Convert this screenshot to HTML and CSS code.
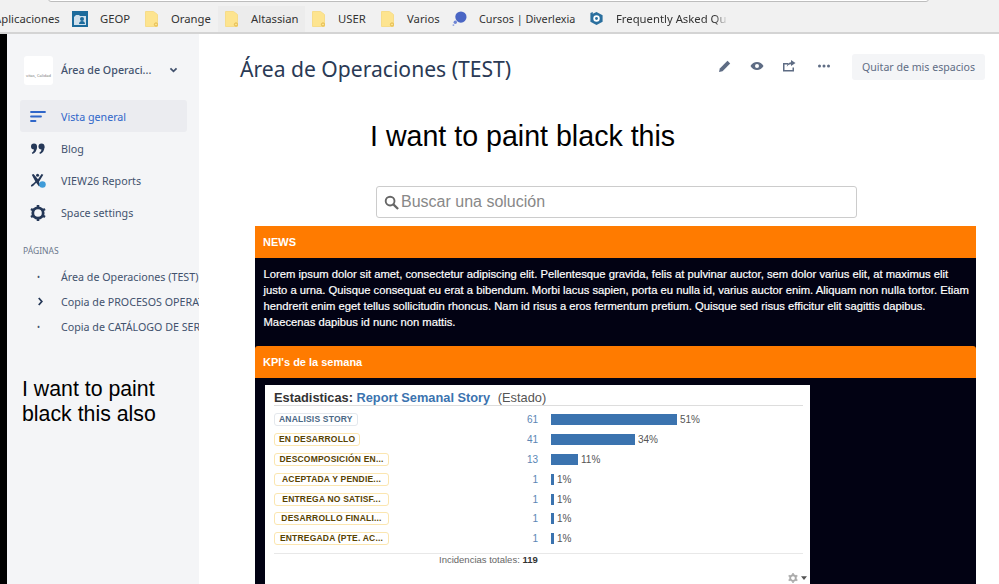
FILE: index.html
```html
<!DOCTYPE html>
<html lang="es">
<head>
<meta charset="utf-8">
<title>Área de Operaciones (TEST)</title>
<link rel="stylesheet" href="styles.css">
</head>
<body>
<header class="browser">
  <div class="address"></div>
  <nav class="bookmarks">
    <span class="bm bm-apps">Aplicaciones</span>
    <span class="bm bm-geop"><svg class="fav" viewBox="0 0 16 16"><rect width="16" height="16" fill="#1c6b9c"/><path d="M2 6l2-2h3l1 1h6v9H2z" fill="#cfe0ec"/><circle cx="10" cy="8" r="2" fill="#1c6b9c"/><path d="M7 13c0-2 1.500-3 3-3s3 1 3 3z" fill="#1c6b9c"/></svg>GEOP</span>
    <span class="bm bm-orange"><svg class="folder" viewBox="0 0 13 16"><path d="M.5.500h8l4 3v12H.5z" fill="#fde48f" stroke="#f6dc8a"/><circle cx="11" cy="13.500" r="1.600" fill="none" stroke="#e3b94c"/></svg>Orange</span>
    <span class="bm bm-alt"><svg class="folder" viewBox="0 0 13 16"><path d="M.5.500h8l4 3v12H.5z" fill="#fde48f" stroke="#f6dc8a"/><circle cx="11" cy="13.500" r="1.600" fill="none" stroke="#e3b94c"/></svg>Altassian</span>
    <span class="bm bm-user"><svg class="folder" viewBox="0 0 13 16"><path d="M.5.500h8l4 3v12H.5z" fill="#fde48f" stroke="#f6dc8a"/><circle cx="11" cy="13.500" r="1.600" fill="none" stroke="#e3b94c"/></svg>USER</span>
    <span class="bm bm-varios"><svg class="folder" viewBox="0 0 13 16"><path d="M.5.500h8l4 3v12H.5z" fill="#fde48f" stroke="#f6dc8a"/><circle cx="11" cy="13.500" r="1.600" fill="none" stroke="#e3b94c"/></svg>Varios</span>
    <span class="bm bm-cursos"><svg class="fav fav-15" viewBox="0 0 16 16"><circle cx="9.500" cy="6.500" r="6" fill="#4a66c4"/><circle cx="3.500" cy="12" r="1.800" fill="#6f86d4"/><circle cx="1.500" cy="15" r="1" fill="#8fa2e0"/></svg>Cursos | Diverlexia</span>
    <span class="bm bm-faq"><svg class="fav fav-15" viewBox="0 0 16 16"><path d="M8 1l6.500 3.500v7L8 15l-6.500-3.500V2L4 1v2z" fill="#2a6f9e"/><circle cx="8" cy="8" r="3.400" fill="#fff"/><circle cx="8" cy="8" r="1.500" fill="#2a6f9e"/></svg><span class="faq-text">Frequently Asked Qu</span></span>
  </nav>
</header>
<div class="app">
  <div class="strip"></div>
  <aside class="sidebar">
    <div class="space">
      <div class="logo"><span>vitas, Calidad</span></div>
      <span class="space-name">Área de Operaci...</span>
      <svg class="chev" viewBox="0 0 10 8"><path d="M1.500 1.500 5 5l3.500-3.500" fill="none" stroke="#42526e" stroke-width="2"/></svg>
    </div>
    <ul class="menu">
      <li class="item active"><svg class="ic" viewBox="0 0 16 16"><path d="M1 3h14M1 7.500h10M1 12h4.500" stroke="#2f66c9" stroke-width="1.800" stroke-linecap="round" fill="none"/></svg>Vista general</li>
      <li class="item"><svg class="ic" viewBox="0 0 16 16"><circle cx="4" cy="5.500" r="3" fill="#253858"/><path d="M7 5.500c0 4-1.800 6.500-4.500 7.500l-.7-1.200C3.500 10.800 4 9.500 4 8z" fill="#253858"/><circle cx="11.500" cy="5.500" r="3" fill="#253858"/><path d="M14.500 5.500c0 4-1.800 6.500-4.500 7.500l-.7-1.200c1.700-1 2.200-2.300 2.200-3.800z" fill="#253858"/></svg>Blog</li>
      <li class="item"><svg class="ic" viewBox="0 0 18 18"><path d="M2 2l2-1 5 6 4-6 2 1-5 8 2 4-2 1-3-4-3 3c-1 1-3 2-3 .500s2-2 3-3l2-2z" fill="#253858"/><circle cx="8.500" cy="2.500" r="1.700" fill="#253858"/><circle cx="14" cy="13" r="3.700" fill="#3f9bd8"/></svg>VIEW26 Reports</li>
      <li class="item"><svg class="ic" viewBox="0 0 16 16"><circle cx="8" cy="8" r="5.200" fill="none" stroke="#253858" stroke-width="2.800"/><path d="M8 0v3M8 13v3M1 4l2.500 1.500M12.500 10.500 15 12M1 12l2.500-1.500M12.500 5.500 15 4" stroke="#253858" stroke-width="2.600"/></svg>Space settings</li>
    </ul>
    <h4 class="pages-title">PÁGINAS</h4>
    <ul class="tree">
      <li class="node"><span class="mark">•</span>Área de Operaciones (TEST)</li>
      <li class="node"><svg class="mark-chev" viewBox="0 0 8 10"><path d="M2 1l3.500 4L2 9" fill="none" stroke="#253858" stroke-width="2"/></svg>Copia de PROCESOS OPERATIVOS</li>
      <li class="node"><span class="mark">•</span>Copia de CATÁLOGO DE SERVICIOS</li>
    </ul>
    <p class="note">I want to paint black this also</p>
  </aside>
  <main class="main">
    <div class="page-head">
      <h1 class="page-title">Área de Operaciones (TEST)</h1>
      <div class="actions">
        <svg class="act act-edit" viewBox="0 0 14 14"><path d="M1 13l.8-3.500L9.500 1.800l2.700 2.700-7.700 7.700z" fill="#5e6c84"/></svg>
        <svg class="act act-eye" viewBox="0 0 14 14"><path fill-rule="evenodd" d="M.5 7C2 4.300 4.300 3 7 3s5 1.300 6.500 4C12 9.700 9.700 11 7 11S2 9.700.5 7zM7 5a2 2 0 1 0 0 4 2 2 0 0 0 0-4z" fill="#5e6c84"/></svg>
        <svg class="act act-share" viewBox="0 0 14 14"><path d="M1 4h5v1.500H2.500v5.500h8V8.500H12V12.500H1z" fill="#5e6c84"/><path d="M9 1l4.500 3L9 7V5.200C7 5.200 5.500 6 4.800 8c0-3 1.700-4.500 4.200-4.800z" fill="#5e6c84"/></svg>
        <svg class="act act-more" viewBox="0 0 14 14"><circle cx="2.500" cy="7" r="1.500" fill="#5e6c84"/><circle cx="7" cy="7" r="1.500" fill="#5e6c84"/><circle cx="11.500" cy="7" r="1.500" fill="#5e6c84"/></svg>
        <button class="remove">Quitar de mis espacios</button>
      </div>
    </div>
    <p class="paint">I want to paint black this</p>
    <div class="search">
      <svg class="search-ic" viewBox="0 0 16 16"><circle cx="6.500" cy="6.500" r="4.700" fill="none" stroke="#666" stroke-width="2"/><path d="M10 10l5 5" stroke="#666" stroke-width="2.400"/></svg>
      <span>Buscar una solución</span>
    </div>
    <section class="panel">
      <div class="band">NEWS</div>
      <p class="lorem">Lorem ipsum dolor sit amet, consectetur adipiscing elit. Pellentesque gravida, felis at pulvinar auctor, sem dolor varius elit, at maximus elit justo a urna. Quisque consequat eu erat a bibendum. Morbi lacus sapien, porta eu nulla id, varius auctor enim. Aliquam non nulla tortor. Etiam hendrerit enim eget tellus sollicitudin rhoncus. Nam id risus a eros fermentum pretium. Quisque sed risus efficitur elit sagittis dapibus. Maecenas dapibus id nunc non mattis.</p>
      <div class="band band-kpi">KPI's de la semana</div>
      <div class="kpi-body">
        <div class="gadget">
          <h2 class="gadget-title">Estadisticas: <a>Report Semanal Story</a> <span>(Estado)</span></h2>
          <div class="rows">
            <div class="row"><span class="lz lz-grey">ANALISIS STORY</span><span class="num">61</span><span class="bar bar-51"></span><span class="pct">51%</span></div>
            <div class="row"><span class="lz">EN DESARROLLO</span><span class="num">41</span><span class="bar bar-34"></span><span class="pct">34%</span></div>
            <div class="row"><span class="lz lz-w">DESCOMPOSICIÓN EN...</span><span class="num">13</span><span class="bar bar-11"></span><span class="pct">11%</span></div>
            <div class="row"><span class="lz lz-w">ACEPTADA Y PENDIE...</span><span class="num">1</span><span class="bar bar-1"></span><span class="pct">1%</span></div>
            <div class="row"><span class="lz lz-w">ENTREGA NO SATISF...</span><span class="num">1</span><span class="bar bar-1"></span><span class="pct">1%</span></div>
            <div class="row"><span class="lz lz-w">DESARROLLO FINALI...</span><span class="num">1</span><span class="bar bar-1"></span><span class="pct">1%</span></div>
            <div class="row"><span class="lz lz-w">ENTREGADA (PTE. AC...</span><span class="num">1</span><span class="bar bar-1"></span><span class="pct">1%</span></div>
          </div>
          <div class="total">Incidencias totales: <b>119</b></div>
          <div class="gear"><svg viewBox="0 0 16 16" class="gear-ic"><circle cx="8" cy="8" r="4.500" fill="none" stroke="#aaa" stroke-width="3"/><path d="M8 0v3M8 13v3M1 4l2.500 1.500M12.500 10.500 15 12M1 12l2.500-1.500M12.500 5.500 15 4" stroke="#aaa" stroke-width="2.400"/></svg><svg viewBox="0 0 8 5" class="gear-caret"><path d="M0 0h8L4 5z" fill="#555"/></svg></div>
        </div>
      </div>
    </section>
  </main>
</div>
</body>
</html>
```
FILE: styles.css
```css
* { box-sizing: border-box; }
html, body { margin: 0; height: 584px; overflow: hidden; background: #fff; }
body { font-family: "Noto Sans", sans-serif; display: flex; flex-direction: column; }
ul { list-style: none; margin: 0; padding: 0; }

.browser { height: 34px; flex: none; background: #f1f1f1; border-bottom: 2px solid #d4d4d4; position: relative; overflow: hidden; }
.address { position: absolute; left: 48px; width: 881px; top: -20px; height: 22px; border: 1px solid #bdbdbd; border-radius: 3px; background: #fff; }
.bookmarks { display: flex; align-items: center; height: 32px; white-space: nowrap; font-size: 11.300px; color: #333; padding-top: 5px; margin-left: -6px; }
.bm { display: flex; align-items: center; height: 26px; flex: none; }
.fav { width: 16px; height: 16px; margin-right: 12px; flex: none; }
.fav-15 { width: 15px; height: 15px; }
.folder { width: 13px; height: 16px; margin-right: 13px; flex: none; }
.bm-apps { width: 78px; }
.bm-geop { width: 73px; }
.bm-orange { width: 73px; }
.bm-alt { width: 87px; background: #ececec; padding-left: 7px; }
.bm-user { width: 76px; padding-left: 7px; }
.bm-varios { width: 71px; }
.bm-cursos { width: 137px; font-size: 10.800px; }
.bm-faq { width: 150px; }
.faq-text { width: 112px; overflow: hidden; -webkit-mask-image: linear-gradient(90deg, #000 88%, transparent); mask-image: linear-gradient(90deg, #000 88%, transparent); }

.app { flex: 1; display: flex; min-height: 0; }
.strip { width: 7px; flex: none; background: #000; }
.sidebar { width: 192px; flex: none; background: #f4f5f7; overflow: hidden; padding: 21px 12px 0 13px; color: #42526e; font-size: 10.700px; }
.space { display: flex; align-items: center; height: 30px; padding-left: 4px; }
.logo { width: 29px; height: 29px; background: #fff; border-radius: 3px; display: flex; align-items: center; justify-content: center; overflow: hidden; margin-right: 8px; flex: none; }
.logo span { font-size: 4px; color: #777; white-space: nowrap; margin-top: 10px; }
.space-name { font-size: 10.700px; font-weight: 500; width: 100px; white-space: nowrap; }
.chev { width: 9px; height: 7px; margin-left: 8px; }
.menu { margin-top: 15px; }
.item { display: flex; align-items: center; height: 32px; padding: 1px 0 0 10px; white-space: nowrap; }
.item.active { background: #ebecf0; color: #2f66c9; border-radius: 3px; }
.ic { width: 16px; height: 16px; margin-right: 15px; flex: none; }
.pages-title { margin: 17px 0 0 3px; font-size: 8.500px; font-weight: 400; line-height: 12px; color: #6b778c; }
.tree { margin-top: 7px; white-space: nowrap; }
.node { display: flex; align-items: center; height: 25px; }
.mark { width: 41px; padding-left: 17px; font-size: 8px; color: #42526e; flex: none; }
.mark-chev { width: 7px; height: 9px; margin: 0 17px 0 17px; flex: none; }
.note { margin: 38px 0 0 2px; font: 21.300px/25px "Liberation Sans", sans-serif; color: #000; width: 160px; }

.main { flex: 1; padding: 0 14px 0 41px; min-width: 0; }
.page-head { display: flex; justify-content: space-between; align-items: flex-start; height: 61px; padding-top: 20px; }
.page-title { margin: 0; font-size: 21.100px; line-height: 30px; font-weight: 400; color: #2a3a55; white-space: nowrap; }
.actions { display: flex; align-items: center; }
.act { width: 14px; height: 14px; flex: none; margin-bottom: 3px; }
.act-edit { margin-right: 18px; }
.act-eye { margin-right: 18px; }
.act-share { margin-right: 21px; }
.act-more { margin-right: 21px; }
.remove { height: 26px; width: 133px; border: 0; border-radius: 3px; background: #f4f5f7; color: #5e6c84; font: 10.600px "Noto Sans", sans-serif; padding: 0; }
.paint { margin: 23px 0 0 130px; font: 28.600px/36px "Liberation Sans", sans-serif; color: #000; }
.search { margin: 32px 0 0 136px; width: 481px; height: 32px; border: 1px solid #ccc; border-radius: 3px; display: flex; align-items: center; padding-left: 7px; color: #888; font: 16px "Liberation Sans", sans-serif; }
.search-ic { width: 15px; height: 15px; margin-right: 2px; }

.panel { margin: 8px 0 0 15px; width: 721px; height: 358px; overflow: hidden; background: #020213; }
.band { height: 32px; background: #ff7b00; color: #fff; font: 700 11px/32px "Liberation Sans", sans-serif; padding-left: 8px; }
.band-kpi { border-radius: 3px 3px 0 0; }
.lorem { margin: 0; height: 88px; padding: 8px 6px 0 8.500px; color: #fff; font: 400 11.250px/16px "Liberation Sans", sans-serif; -webkit-text-stroke: .2px #fff; }
.kpi-body { height: 206px; padding: 7px 0 0 10px; }
.gadget { width: 545px; height: 199px; background: #fff; padding: 5px 7px 0 9px; font-family: "Liberation Sans", sans-serif; position: relative; }
.gadget-title { margin: 0; font-size: 12.800px; line-height: 15px; font-weight: 700; color: #333; height: 16px; border-bottom: 1px solid #ddd; white-space: nowrap; }
.gadget-title a { color: #3b73af; }
.gadget-title span { font-weight: 400; margin-left: 4px; color: #555; }
.rows { padding: 4px 0 4px; border-bottom: 1px solid #e8e8e8; }
.row { display: grid; grid-template-columns: 239px 25px max-content max-content; align-items: center; height: 19.800px; font-size: 9.500px; }
.lz { justify-self: start; height: 13px; line-height: 11px; border: 1px solid #fbe6b0; border-radius: 3px; padding: 0 4px; font-size: 8.500px; font-weight: 700; color: #594300; letter-spacing: .2px; text-align: center; white-space: nowrap; }
.lz-grey { border-color: #e4e8ed; color: #4a6785; }
.lz-w { width: 115px; padding: 0; }
.num { text-align: right; color: #5b86b5; font-size: 10px; }
.bar { height: 11px; background: #3b73af; margin-left: 13px; }
.bar-51 { width: 126px; }
.bar-34 { width: 84px; }
.bar-11 { width: 27px; }
.bar-1 { width: 3px; }
.pct { color: #555; font-size: 10px; margin-left: 3px; }
.total { font-size: 9.500px; color: #666; padding-left: 165px; line-height: 12px; }
.total b { color: #333; }
.gear { position: absolute; right: 3px; bottom: 1px; display: flex; align-items: center; gap: 3px; }
.gear-ic { width: 10px; height: 10px; }
.gear-caret { width: 6px; height: 4px; }
```
